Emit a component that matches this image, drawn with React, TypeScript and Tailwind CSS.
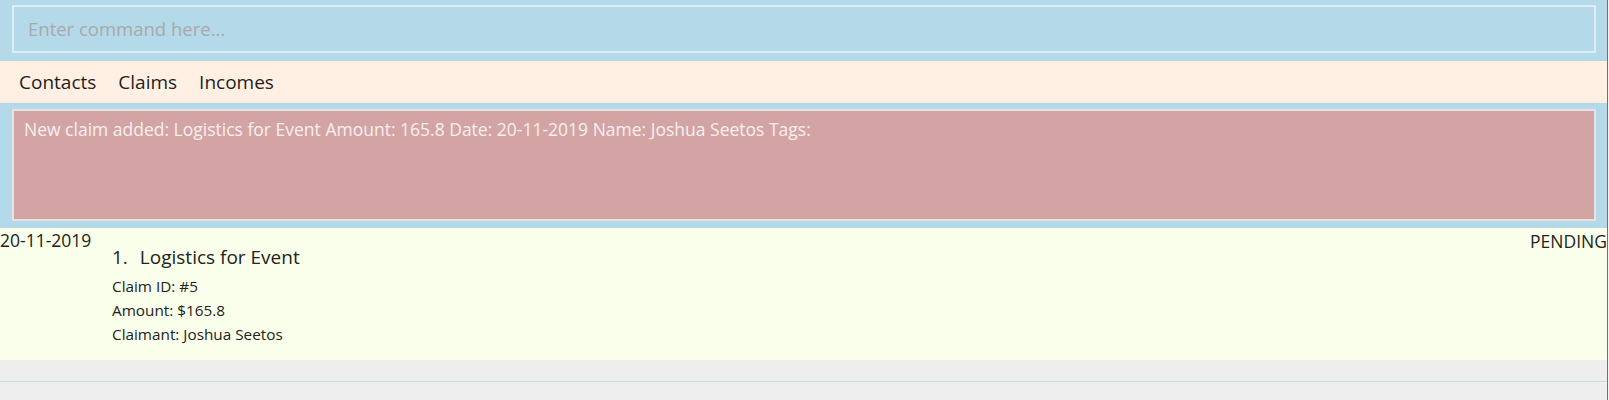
export default function App() {
  return (
    <div className="flex h-[400px] w-[1609px] overflow-hidden font-['Open_Sans',sans-serif] text-[#222222]">
      <div className="flex w-[1607px] flex-col">
        {/* Command box */}
        <div className="bg-[#b4d9e9] pb-[8px] pl-[12px] pr-[11px] pt-[5px]">
          <div className="flex h-[48px] items-center border-2 border-[#dcedf5] px-[14px]">
            <span className="text-[18.5px] text-[#a9a9a9]">Enter command here...</span>
          </div>
        </div>

        {/* Tabs */}
        <div className="flex h-[42px] items-center gap-[22px] bg-[#fff0e3] px-[19px] text-[19px] text-[#1e1e1e]">
          <span>Contacts</span>
          <span>Claims</span>
          <span>Incomes</span>
        </div>

        {/* Result display */}
        <div className="bg-[#b4d9e9] pb-[7px] pl-[12px] pr-[11px] pt-[6px]">
          <div className="h-[112px] border-2 border-[#e6e3e3] bg-[#d4a4a5] px-[10px] pt-[7px] text-[17.5px] leading-[22px] text-[#f6f0f0]">
            New claim added: Logistics for Event Amount: 165.8 Date: 20-11-2019 Name: Joshua Seetos Tags:
          </div>
        </div>

        {/* Claim list */}
        <div className="flex h-[132px] bg-[#f9ffea]">
          <div className="w-[112px] shrink-0 pt-[1px] text-[17.5px] leading-[22px]">20-11-2019</div>
          <div className="flex flex-1 flex-col pt-[16px]">
            <div className="text-[19px] leading-[26px]">
              <span>1.</span>
              <span className="ml-[12px]">Logistics for Event</span>
            </div>
            <div className="mt-[4px] flex flex-col text-[15.3px] leading-[24px]">
              <span>Claim ID: #5</span>
              <span>Amount: $165.8</span>
              <span>Claimant: Joshua Seetos</span>
            </div>
          </div>
          <div className="pt-[2px] text-[17.5px] leading-[22px]">PENDING</div>
        </div>

        {/* Footer */}
        <div className="flex-1 bg-[#eeeeee] pt-[21px]">
          <div className="h-px bg-[#c6dde6]" />
        </div>
      </div>
      <div className="w-px bg-[#707070]" />
      <div className="w-px bg-[#f4f4f4]" />
    </div>
  );
}
